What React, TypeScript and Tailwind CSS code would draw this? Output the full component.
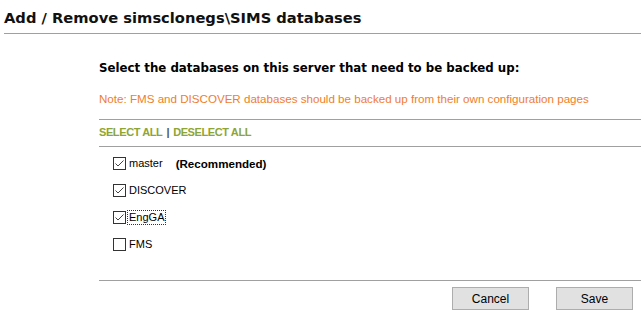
import { useState } from "react";

type Db = { name: string; note?: string };

const databases: Db[] = [
  { name: "master", note: "(Recommended)" },
  { name: "DISCOVER" },
  { name: "EngGA" },
  { name: "FMS" },
];

function Check({ checked }: { checked: boolean }) {
  return (
    <span className="flex h-[13px] w-[13px] items-center justify-center border border-[#333] bg-white">
      {checked && (
        <svg width="11" height="11" viewBox="0 0 11 11">
          <path d="M1.5 5.5 L4 8 L9.5 2.5" fill="none" stroke="#444" strokeWidth="1" />
        </svg>
      )}
    </span>
  );
}

export default function App() {
  const [selected, setSelected] = useState<string[]>(["master", "DISCOVER", "EngGA"]);

  const toggle = (name: string) =>
    setSelected((s) => (s.includes(name) ? s.filter((n) => n !== name) : [...s, name]));

  return (
    <div className="h-[318px] w-[641px] bg-white font-['Liberation_Sans',sans-serif] text-[12px] text-black">
      <div className="ml-[4px] border-b border-[#a0a0a0] pt-[8px] pb-[6px] font-['DejaVu_Sans',sans-serif] text-[14.7px] leading-[19px] font-bold text-[#111]">
        Add / Remove simsclonegs\SIMS databases
      </div>

      <div className="ml-[99px]">
        <div className="mt-[26px] font-['DejaVu_Sans',sans-serif] text-[11.8px] leading-[16px] font-bold">
          Select the databases on this server that need to be backed up:
        </div>
        <div className="mt-[15px] text-[11.6px] leading-[15px] text-[#f07d2e]">
          Note: FMS and DISCOVER databases should be backed up from their own configuration pages
        </div>

        <div className="mt-[13px] border-t border-[#a0a0a0] pt-[5px] pb-[6px] text-[11px] leading-[15px] font-bold tracking-[-0.4px] text-[#8da534]">
          <button className="cursor-pointer" onClick={() => setSelected(databases.map((d) => d.name))}>
            SELECT ALL
          </button>
          <span className="mx-[4px] text-[#555]">|</span>
          <button className="cursor-pointer" onClick={() => setSelected([])}>
            DESELECT ALL
          </button>
        </div>

        <div className="border-t border-[#a0a0a0] pt-[3px] pl-[14px]">
          {databases.map((db) => (
            <label key={db.name} className="flex h-[27px] cursor-pointer items-center text-[11px]" onClick={() => toggle(db.name)}>
              <Check checked={selected.includes(db.name)} />
              <span
                className={
                  db.name === "EngGA"
                    ? "ml-[2px] px-px leading-[13px] outline-1 outline-[#333] outline-dotted"
                    : "ml-[3px] leading-[13px]"
                }
              >
                {db.name}
              </span>
              {db.note && <span className="ml-[13px] text-[11.6px] font-bold">{db.note}</span>}
            </label>
          ))}
        </div>

        <div className="mt-[22px] flex justify-end gap-[27px] border-t border-[#a0a0a0] pt-[6px] pr-[8px]">
          <button className="h-[23px] w-[77px] border border-[#adadad] bg-[#e1e1e1]">Cancel</button>
          <button className="h-[23px] w-[77px] border border-[#adadad] bg-[#e1e1e1]">Save</button>
        </div>
      </div>
    </div>
  );
}
